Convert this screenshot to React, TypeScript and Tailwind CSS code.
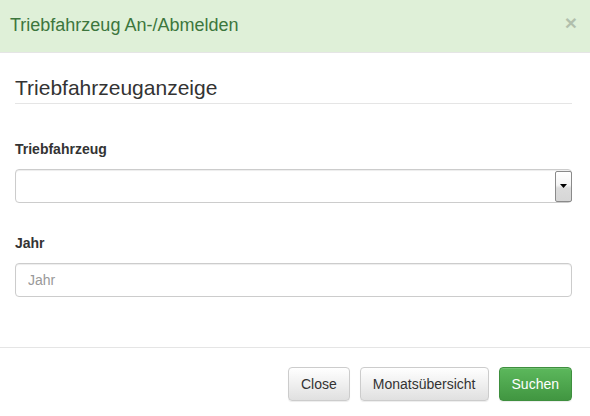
import React from 'react';

const font = { fontFamily: '"Liberation Sans", Arial, sans-serif' };

const App: React.FC = () => {
    return (
        <div className="w-[590px] h-[416px] bg-white text-[14px] text-[#333] flex flex-col overflow-hidden font-['Liberation_Sans',Arial,sans-serif]">
            {/* HEADER */}
            <div className="h-[53px] bg-[#dff0d8] border-b border-[#e5e5e5] flex items-center justify-between pl-[10px] pr-[13px] shrink-0">
                <h4 className="text-[18px] text-[#3c763d] leading-none -mt-[2px]">Triebfahrzeug An-/Abmelden</h4>
                <button className="text-[21px] font-bold leading-none text-black opacity-20 -mt-[7px]">×</button>
            </div>

            {/* BODY */}
            <div className="pl-[15px] pr-[18px] pt-[20px] flex-1">
                <div className="text-[21px] leading-[30px] border-b border-[#e5e5e5] pb-0 mb-[35px]">Triebfahrzeuganzeige</div>

                <div className="mb-[30px]">
                    <label className="block font-bold leading-[20px] mb-[10px]">Triebfahrzeug</label>
                    <div className="h-[34px] border border-[#ccc] rounded-[4px] shadow-[inset_0_1px_1px_rgba(0,0,0,0.075)] flex items-center justify-end pr-0">
                        <div className="w-[17px] h-[31px] border border-[#8a8a8a] rounded-[2px] bg-[linear-gradient(to_bottom,#ffffff_0%,#f5f5f5_45%,#dcdcdc_55%,#d6d6d6_100%)] flex items-center justify-center -mr-px">
                            <svg width="7" height="4" viewBox="0 0 7 4"><path d="M0 0h7L3.5 4z" fill="#000" /></svg>
                        </div>
                    </div>
                </div>

                <div>
                    <label className="block font-bold leading-[20px] mb-[10px]">Jahr</label>
                    <input
                        type="text"
                        placeholder="Jahr"
                        style={font}
                        className="w-full h-[34px] border border-[#ccc] rounded-[4px] px-[12px] text-[14px] placeholder:text-[#999] shadow-[inset_0_1px_1px_rgba(0,0,0,0.075)] outline-none"
                    />
                </div>
            </div>

            {/* FOOTER */}
            <div className="h-[69px] border-t border-[#e5e5e5] flex items-start justify-end gap-[10px] pt-[19px] pr-[18px] shrink-0">
                <button className="h-[34px] px-[12px] rounded-[4px] border border-[#ccc] text-[#333] bg-[linear-gradient(to_bottom,#ffffff_0%,#e0e0e0_100%)] shadow-[inset_0_1px_0_rgba(255,255,255,0.15),0_1px_1px_rgba(0,0,0,0.075)]">Close</button>
                <button className="h-[34px] px-[12px] rounded-[4px] border border-[#ccc] text-[#333] bg-[linear-gradient(to_bottom,#ffffff_0%,#e0e0e0_100%)] shadow-[inset_0_1px_0_rgba(255,255,255,0.15),0_1px_1px_rgba(0,0,0,0.075)]">Monatsübersicht</button>
                <button className="h-[34px] px-[12px] rounded-[4px] border border-[#3e8f3e] text-white bg-[linear-gradient(to_bottom,#5cb85c_0%,#419641_100%)] shadow-[inset_0_1px_0_rgba(255,255,255,0.15),0_1px_1px_rgba(0,0,0,0.075)]">Suchen</button>
            </div>
        </div>
    );
};

export default App;
